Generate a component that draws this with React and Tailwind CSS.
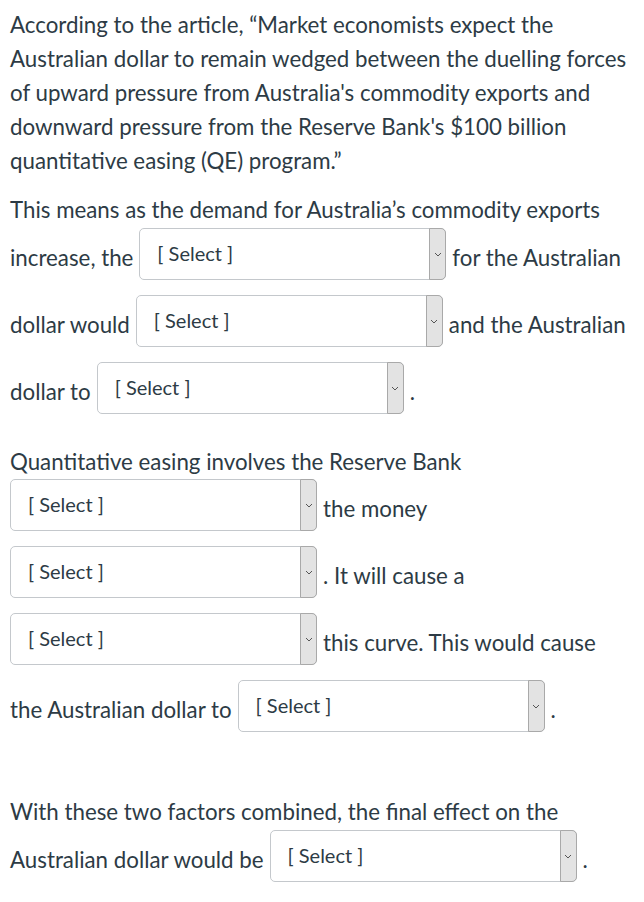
import React from 'react';

function Select({ className = '' }) {
	return (
		<div
			className={`relative flex h-[52px] w-[307px] shrink-0 items-center rounded-[5px] border border-[#c4c8cc] bg-white ${className}`}
		>
			<span className="mb-[3px] pl-[17px] text-[20px] leading-none text-[#2d3b45]">[ Select ]</span>
			<div className="absolute -right-px -top-px flex h-[52px] w-[17px] items-center justify-center rounded-r-[5px] border border-[#a9a9a9] bg-[#e3e3e3]">
				<svg width="8" height="5" viewBox="0 0 8 5" fill="none">
					<path d="M1 1 L4 4 L7 1" stroke="#555" strokeWidth="1" />
				</svg>
			</div>
		</div>
	);
}

function Row({ before, after, className = '' }) {
	return (
		<div className={`flex items-start ${className}`}>
			{before && <span className="mt-[13px] mr-[6px] whitespace-nowrap">{before}</span>}
			<Select />
			{after && <span className="mt-[13px] ml-[6px] whitespace-nowrap">{after}</span>}
		</div>
	);
}

export default function App() {
	return (
		<div
			className="min-h-[902px] whitespace-nowrap bg-white pl-[10px] pt-2 text-[22.3px] leading-[34px] text-[#2d3b45]"
			style={{ fontFamily: 'Lato, "Noto Sans", sans-serif' }}
		>
			<p>
				According to the article, “Market economists expect the
				<br />
				Australian dollar to remain wedged between the duelling forces
				<br />
				of upward pressure from Australia's commodity exports and
				<br />
				downward pressure from the Reserve Bank's $100 billion
				<br />
				quantitative easing (QE) program.”
			</p>
			<p className="mt-[15px]">This means as the demand for Australia’s commodity exports</p>
			<Row className="mt-px" before="increase, the" after="for the Australian" />
			<Row className="mt-[15px]" before="dollar would" after="and the Australian" />
			<Row className="mt-[15px]" before="dollar to" after="." />
			<p className="mt-[31px]">Quantitative easing involves the Reserve Bank</p>
			<Row after="the money" />
			<Row className="mt-[15px]" after=". It will cause a" />
			<Row className="mt-[15px]" after="this curve. This would cause" />
			<Row className="mt-[15px]" before="the Australian dollar to" after="." />
			<p className="mt-[63px]">With these two factors combined, the final effect on the</p>
			<Row className="mt-[1px]" before="Australian dollar would be" after="." />
		</div>
	);
}
